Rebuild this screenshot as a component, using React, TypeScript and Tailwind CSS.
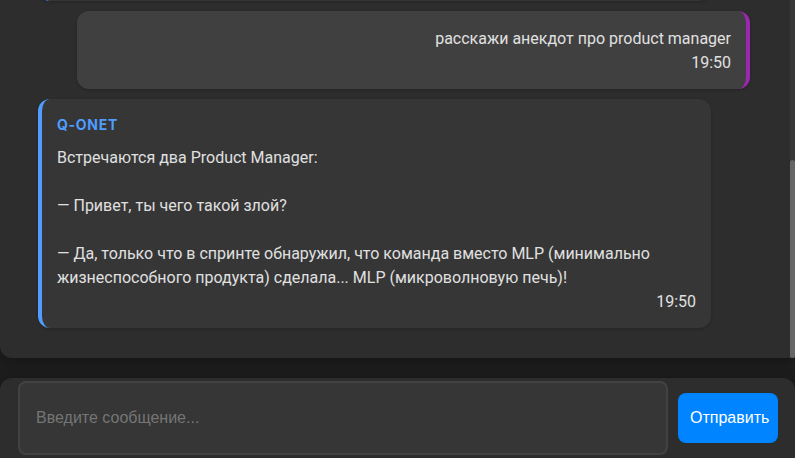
import type { ReactNode } from "react";

const botCard =
  "mr-[39px] rounded-xl border-l-4 border-[#4f9dff] bg-[#363636] px-[15px] pt-4 pb-[14px] shadow-[0_1px_3px_rgba(0,0,0,0.2)]";

function BotMessage({ children }: { children: ReactNode }) {
  return (
    <article className={botCard}>
      <h2 className="mb-3 font-[Inter,sans-serif] text-sm leading-[19px] font-bold tracking-wider text-[#4f9dff]">
        Q-ONET
      </h2>
      {children}
    </article>
  );
}

function UserMessage({ children }: { children: ReactNode }) {
  return (
    <article className="ml-[39px] rounded-xl border-r-4 border-[#9c27b0] bg-[#404040] px-[15px] pt-4 pb-[14px] text-right shadow-[0_1px_3px_rgba(0,0,0,0.2)]">
      {children}
    </article>
  );
}

export default function App() {
  return (
    <div className="flex flex-col gap-5 overflow-hidden bg-[#1e1e1e] font-[Roboto,sans-serif] text-base leading-6 text-[#e0e0e0]">
      <main className="flex overflow-hidden rounded-bl-xl bg-[#2d2d2d] shadow-[0_4px_12px_rgba(0,0,0,0.3)]">
        <section className="flex min-w-0 flex-1 flex-col gap-[10px] pr-10 pb-[30px] pl-[38px]">
          <div className="flex h-px flex-col justify-end">
            <div className={botCard} />
          </div>
          <UserMessage>
            <p>расскажи анекдот про product manager</p>
            <time className="block">19:50</time>
          </UserMessage>
          <BotMessage>
            <div className="flex flex-col gap-6">
              <p>Встречаются два Product Manager:</p>
              <p>— Привет, ты чего такой злой?</p>
              <p>
                — Да, только что в спринте обнаружил, что команда вместо MLP (минимально
                жизнеспособного продукта) сделала... MLP (микроволновую печь)!
              </p>
            </div>
            <time className="block text-right">19:50</time>
          </BotMessage>
        </section>
        <div className="flex w-[5px] flex-col justify-end bg-[#383838]">
          <div className="h-[198px] rounded-[3px] bg-[#666666]" />
        </div>
      </main>
      <form
        className="flex items-center gap-[10px] rounded-t-xl bg-[#2d2d2d] py-[3px] pr-[17px] pl-[18px] font-['Liberation_Sans',Arial,sans-serif] text-base shadow-[0_0_12px_rgba(0,0,0,0.3)]"
        onSubmit={(e) => e.preventDefault()}
      >
        <input
          type="text"
          aria-label="Введите сообщение"
          placeholder="Введите сообщение..."
          className="h-[74px] min-w-0 flex-1 rounded-lg border-2 border-[#424242] bg-[#363636] px-4 outline-none placeholder:text-[#757575]"
        />
        <button type="submit" className="h-[50px] w-[100px] rounded-lg bg-[#0084ff] px-3 text-left text-white">
          Отправить
        </button>
      </form>
    </div>
  );
}
